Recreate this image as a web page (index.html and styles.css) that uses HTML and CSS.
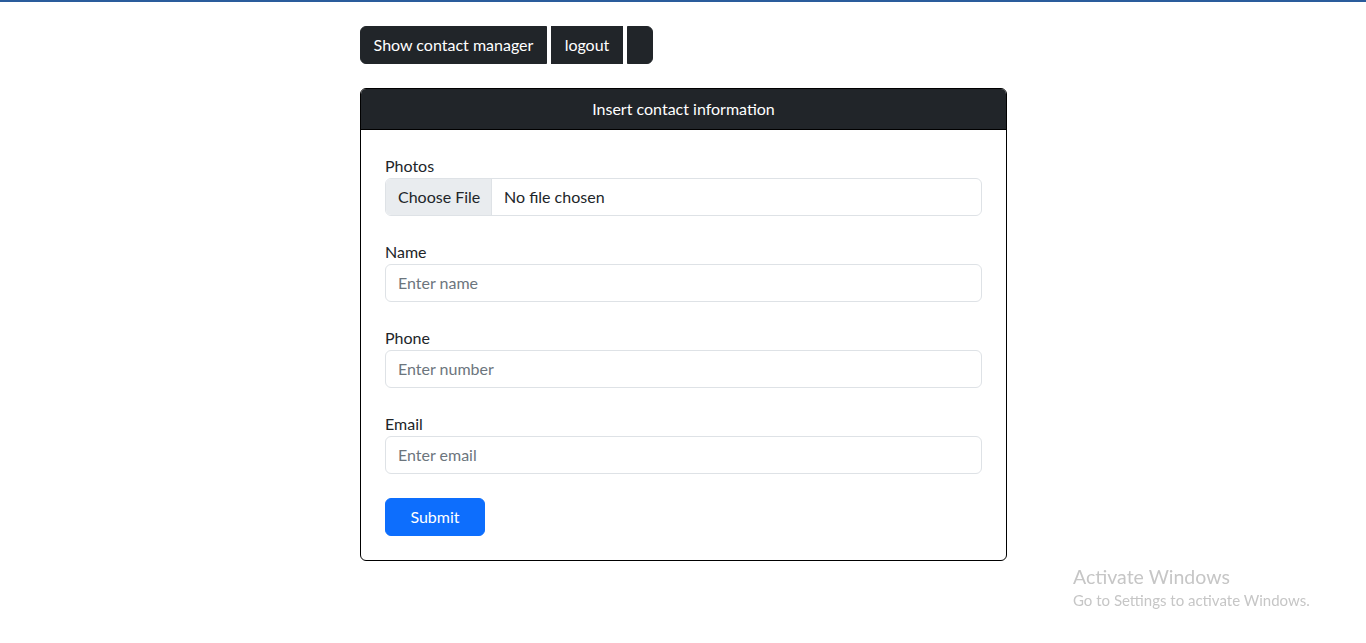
FILE: index.html
```html
<!DOCTYPE html>
<html lang="en">
<head>
<meta charset="utf-8">
<title>Contact manager</title>
<link rel="stylesheet" href="styles.css">
</head>
<body>
<div class="topline"></div>
<main class="wrap">
  <div class="btn-group">
    <button class="btn btn-dark first">Show contact manager</button>
    <button class="btn btn-dark middle">logout</button>
    <button class="btn btn-dark last"></button>
  </div>
  <section class="card">
    <header class="card-header">Insert contact information</header>
    <form class="card-body">
      <div class="field">
        <label class="form-label">Photos</label>
        <div class="file-input">
          <span class="file-btn">Choose File</span>
          <span class="file-name">No file chosen</span>
        </div>
      </div>
      <div class="field">
        <label class="form-label">Name</label>
        <input class="form-control" type="text" placeholder="Enter name">
      </div>
      <div class="field">
        <label class="form-label">Phone</label>
        <input class="form-control" type="text" placeholder="Enter number">
      </div>
      <div class="field">
        <label class="form-label">Email</label>
        <input class="form-control" type="text" placeholder="Enter email">
      </div>
      <button type="button" class="btn btn-primary">Submit</button>
    </form>
  </section>
</main>
<div class="activate">
  <div class="act-title">Activate Windows</div>
  <div class="act-sub">Go to Settings to activate Windows.</div>
</div>
</body>
</html>
```

FILE: styles.css
```css
* { box-sizing: border-box; }
html, body { margin: 0; padding: 0; background: #fff; }
body {
  font-family: "Lato", "Open Sans", sans-serif;
  font-size: 16px;
  line-height: 24px;
  color: #212529;
}
.topline { height: 2px; background: #2a5c9c; }
.wrap {
  width: 647px;
  margin: 24px 0 0 360px;
}
.btn-group { display: flex; gap: 4px; height: 38px; }
.btn {
  font-family: inherit;
  font-size: 16px;
  line-height: 24px;
  padding: 6px 0;
  border: 1px solid transparent;
  border-radius: 0;
  text-align: center;
  white-space: nowrap;
  cursor: pointer;
}
.btn-dark { background: #212529; color: #fff; border-color: #212529; }
.btn-group .first { border-radius: 6px 0 0 6px; width: 187px; }
.btn-group .middle { width: 72px; }
.btn-group .last { border-radius: 0 6px 6px 0; width: 26px; }
.card {
  margin-top: 24px;
  border: 1px solid #000;
  border-radius: 6px;
  overflow: hidden;
}
.card-header {
  background: #212529;
  color: #fff;
  text-align: center;
  padding: 8px 16px;
  border-bottom: 1px solid #000;
}
.card-body {
  padding: 24px;
  display: flex;
  flex-direction: column;
  gap: 24px;
  align-items: flex-start;
}
.field { width: 100%; }
.form-label { display: block; }
.form-control, .file-input {
  display: block;
  width: 100%;
  height: 38px;
  border: 1px solid #dee2e6;
  border-radius: 6px;
  font-family: inherit;
  font-size: 16px;
  color: #212529;
}
.form-control { padding: 5px 12px 7px; }
.form-control::placeholder { color: #6c757d; }
.file-input { display: flex; overflow: hidden; }
.file-btn {
  background: #e9ecef;
  border-right: 1px solid #dee2e6;
  padding: 6px 12px;
  line-height: 24px;
  width: 106px;
  white-space: nowrap;
  flex: none;
}
.file-name { padding: 6px 12px; line-height: 24px; white-space: nowrap; }
.btn-primary {
  background: #0d6efd;
  border-color: #0d6efd;
  color: #fff;
  border-radius: 6px;
  width: 100px;
  height: 38px;
}
.activate {
  position: fixed;
  left: 1073px;
  top: 565px;
  color: #c6c6c6;
}
.act-title { font-size: 19.5px; line-height: 24px; }
.act-sub { font-size: 15px; line-height: 22px; }
```
